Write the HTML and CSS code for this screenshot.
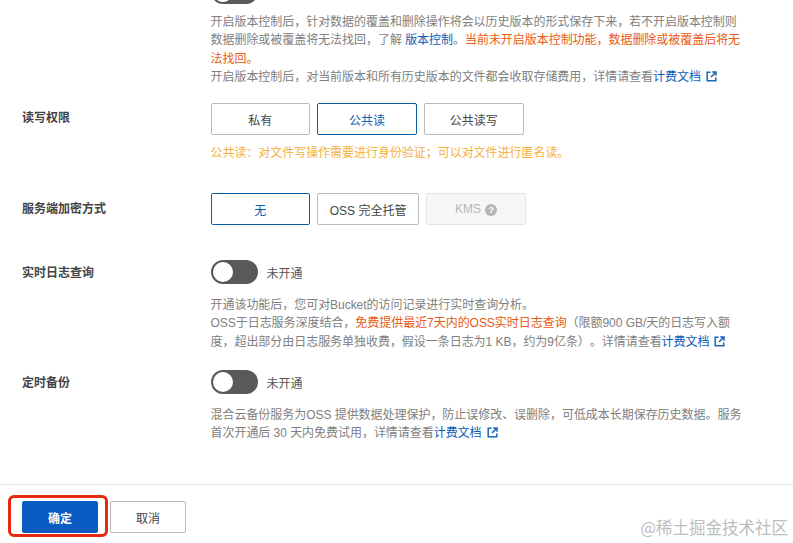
FILE: index.html
```html
<!DOCTYPE html>
<html lang="zh-CN">
<head>
<meta charset="utf-8">
<title>创建 Bucket</title>
<link rel="stylesheet" href="styles.css">
</head>
<body>
<svg class="defs" width="0" height="0" aria-hidden="true">
  <symbol id="ext" viewBox="0 0 11 11">
    <path d="M4.5 1.2H1.2v8.6h8.6V6.5" fill="none" stroke="currentColor" stroke-width="1.5"/>
    <path d="M6.2 1h3.8v3.8M9.6 1.4 5 6" fill="none" stroke="currentColor" stroke-width="1.5"/>
  </symbol>
</svg>
<main class="page">
  <div class="form">
    <section class="row first">
      <div class="label"></div>
      <div class="field">
        <div class="switch clipped"><span class="knob"></span></div>
        <p class="help tight">开启版本控制后，针对数据的覆盖和删除操作将会以历史版本的形式保存下来，若不开启版本控制则<br>数据删除或被覆盖将无法找回，了解 <a>版本控制</a>。<span class="warn">当前未开启版本控制功能，数据删除或被覆盖后将无<br>法找回。</span><br>开启版本控制后，对当前版本和所有历史版本的文件都会收取存储费用，详情请查看<a>计费文档<svg class="ext"><use href="#ext"/></svg></a></p>
      </div>
    </section>
    <section class="row acl">
      <div class="label btn-label">读写权限</div>
      <div class="field">
        <div class="choices">
          <button class="choice">私有</button>
          <button class="choice on">公共读</button>
          <button class="choice">公共读写</button>
        </div>
        <p class="note">公共读：对文件写操作需要进行身份验证；可以对文件进行匿名读。</p>
      </div>
    </section>
    <section class="row enc">
      <div class="label btn-label">服务端加密方式</div>
      <div class="field">
        <div class="choices">
          <button class="choice on">无</button>
          <button class="choice wide">OSS 完全托管</button>
          <button class="choice off">KMS <span class="q">?</span></button>
        </div>
      </div>
    </section>
    <section class="row log">
      <div class="label sw-label">实时日志查询</div>
      <div class="field">
        <div class="sw-line"><div class="switch"><span class="knob"></span></div><span class="sw-text">未开通</span></div>
        <p class="help">开通该功能后，您可对Bucket的访问记录进行实时查询分析。<br>OSS于日志服务深度结合，<span class="warn">免费提供最近7天内的OSS实时日志查询</span>（限额900 GB/天的日志写入额<br>度，超出部分由日志服务单独收费，假设一条日志为1 KB，约为9亿条）。详情请查看<a>计费文档<svg class="ext"><use href="#ext"/></svg></a></p>
      </div>
    </section>
    <section class="row backup">
      <div class="label sw-label">定时备份</div>
      <div class="field">
        <div class="sw-line"><div class="switch"><span class="knob"></span></div><span class="sw-text">未开通</span></div>
        <p class="help">混合云备份服务为OSS 提供数据处理保护，防止误修改、误删除，可低成本长期保存历史数据。服务<br>首次开通后 30 天内免费试用，详情请查看<a>计费文档<svg class="ext"><use href="#ext"/></svg></a></p>
      </div>
    </section>
  </div>
  <footer class="footer">
    <button class="primary">确定</button>
    <button class="cancel">取消</button>
    <span class="mark"></span>
  </footer>
  <div class="watermark">@稀土掘金技术社区</div>
</main>
</body>
</html>
```
FILE: styles.css
```css
* { box-sizing: border-box; }
html, body { margin: 0; height: 100%; background: #fff; }
body { overflow: hidden; font-family: "Liberation Sans", "Noto Sans CJK SC", sans-serif; font-size: 12px; color: #333; text-spacing-trim: space-all; }
.defs { position: absolute; }
.page { position: relative; width: 793px; height: 543px; overflow: hidden; }
.form { height: 484px; padding-left: 22px; overflow: hidden; }
.row { display: grid; grid-template-columns: 188.5px 560px; }
.first { margin-top: -20px; }
.acl { margin-top: 17px; }
.enc { margin-top: 31px; }
.log { margin-top: 35px; }
.backup { margin-top: 19px; }
.label { font-weight: 700; color: #444; line-height: 18px; }
.btn-label { padding-top: 6px; }
.enc .btn-label { padding-top: 7px; }
.sw-label { padding-top: 4px; }
.switch { width: 47px; height: 24px; border-radius: 12px; background: #595959; position: relative; flex: none; }
.knob { position: absolute; left: 2px; top: 2px; width: 20px; height: 20px; border-radius: 50%; background: #fff; }
.help { margin: 0; font-size: 12px; letter-spacing: -.04px; line-height: 18.3px; color: #808080; }
.tight { margin-top: 9px; }
.log .help { margin-top: 12px; }
.backup .help { margin-top: 12px; }
.help a, .help a:visited { color: #0a5bb5; }
.warn { color: #ea5a14; }
.ext { width: 11px; height: 11px; margin-left: 5px; vertical-align: -1px; color: #1a66bb; }
.choices { display: flex; gap: 7.3px; }
.choice { width: 99.5px; height: 32px; padding: 0; background: #fff; border: 1px solid #b9b9b9; border-radius: 2px; font: inherit; font-size: 12px; color: #444; }
.choice.wide { width: 101.5px; }
.choice.on { border-color: #0a5ca8; color: #0a5fb5; }
.choice.off { width: 100px; background: #f6f6f6; border-color: #e4e4e4; color: #b5b5b5; }
.note { margin: 9px 0 0; line-height: 18px; letter-spacing: -.04px; color: #f5b041; }
.q { display: inline-block; width: 12px; height: 12px; border-radius: 50%; background: #b5b5b5; color: #fff; font-size: 9px; line-height: 12px; font-weight: 700; text-align: center; vertical-align: 0; margin-left: 1px; }
.sw-line { display: flex; align-items: center; gap: 9px; }
.sw-text { color: #555; }
.footer { position: relative; height: 59px; border-top: 1px solid #e6e6e6; padding: 16px 0 0 22px; display: flex; align-items: flex-start; gap: 12px; }
.primary, .cancel { width: 76px; height: 32px; padding: 0; border-radius: 2px; font: inherit; }
.primary { background: #0a5cc2; border: 1px solid #0a5cc2; color: #fff; font-weight: 700; }
.cancel { background: #fff; border: 1px solid #b9b9b9; color: #444; }
.mark { position: absolute; left: 8px; top: 10px; width: 100px; height: 42px; border: 3px solid #e8290b; border-radius: 6px; }
.watermark { position: absolute; right: 5px; bottom: 6px; font-family: "Noto Sans CJK SC", serif; font-size: 16.5px; line-height: 20px; color: #bdbdbd; }
```
